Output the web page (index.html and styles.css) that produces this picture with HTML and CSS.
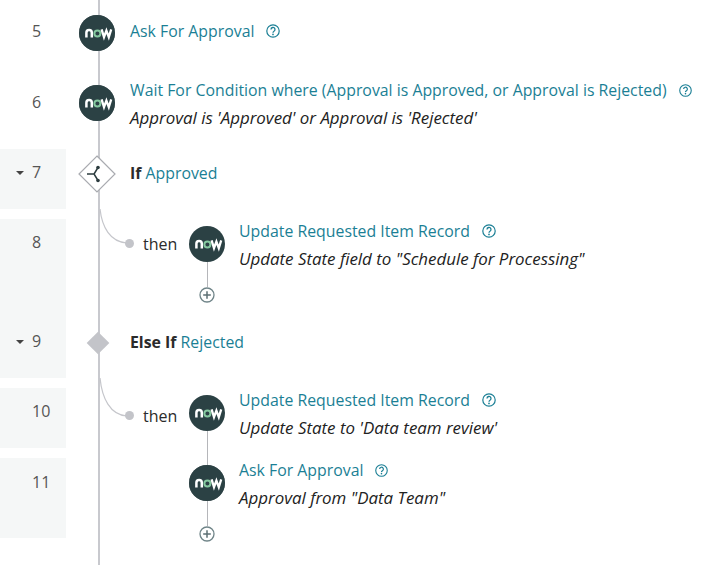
FILE: index.html
```html
<!DOCTYPE html>
<html lang="en">
<head>
    <meta charset="UTF-8">
    <title>Flow Steps</title>
    <link rel="stylesheet" href="styles.css">
</head>
<body>
    <svg width="0" height="0" class="defs">
        <symbol id="now" viewBox="0 0 36 36">
            <circle cx="18" cy="18" r="18" fill="#2b4144"/>
            <path d="M7.4 22.6v-4.8a2.7 2.7 0 0 1 5.4 0v4.8" fill="none" stroke="#fff" stroke-width="2.5"/>
            <circle cx="18.4" cy="18.4" r="3" fill="none" stroke="#86c9a0" stroke-width="2"/>
            <path d="M22.6 14.4l2.4 7.8 2.4-6.6 2.4 6.6 2.4-7.8" fill="none" stroke="#fff" stroke-width="2.3"/>
        </symbol>
        <symbol id="help" viewBox="0 0 14 14">
            <circle cx="7" cy="7" r="6.2" fill="none" stroke="currentColor" stroke-width="1.2"/>
            <path d="M5 5.5a2 2 0 1 1 3 1.7c-.7.4-1 .8-1 1.5" fill="none" stroke="currentColor" stroke-width="1.3"/>
            <circle cx="7" cy="10.4" r=".85" fill="currentColor"/>
        </symbol>
        <symbol id="plus" viewBox="0 0 16 16">
            <circle cx="8" cy="8" r="7" fill="#fff" stroke="#6f8488" stroke-width="1.3"/>
            <path d="M8 4.2v7.6M4.2 8h7.6" stroke="#5d7074" stroke-width="1.5"/>
        </symbol>
    </svg>

    <div class="flow">
        <div class="spine"></div>

        <div class="row row-5">
            <div class="num">5</div>
            <div class="marker"><svg class="now ring"><use href="#now"/></svg></div>
            <div class="body">
                <div class="title"><a>Ask For Approval</a><svg class="help"><use href="#help"/></svg></div>
            </div>
        </div>

        <div class="row row-6">
            <div class="num">6</div>
            <div class="marker"><svg class="now ring"><use href="#now"/></svg></div>
            <div class="body">
                <div class="title"><a>Wait For Condition where (Approval is Approved, or Approval is Rejected)</a><svg class="help small"><use href="#help"/></svg></div>
                <div class="desc">Approval is 'Approved' or Approval is 'Rejected'</div>
            </div>
        </div>

        <div class="row row-7 shaded">
            <div class="num"><span class="caret"></span>7</div>
            <div class="marker">
                <svg class="branch" width="38" height="38" viewBox="0 0 38 38">
                    <path d="M19 1L37 19 19 37 1 19Z" fill="#fff" stroke="#a9abb0" stroke-width="1.2"/>
                    <path d="M9 19h7M20 12.5l-4 6.5 4 6.5" fill="none" stroke="#2b3b3e" stroke-width="1.5"/>
                    <circle cx="20" cy="12.5" r="1.8" fill="#2b3b3e"/>
                    <circle cx="20" cy="25.5" r="1.8" fill="#2b3b3e"/>
                </svg>
            </div>
            <div class="body"><b>If</b> <a>Approved</a></div>
        </div>

        <div class="row row-8 shaded">
            <div class="num">8</div>
            <div class="then">
                <svg class="curve" width="36" height="36" viewBox="0 0 36 36"><path d="M1 0C3 18 11 33 28 34" fill="none" stroke="#c5c6cb" stroke-width="1.2"/></svg>
                <span class="dot"></span>
                <span class="then-label">then</span>
            </div>
            <div class="sub">
                <div class="sub-marker"><svg class="now"><use href="#now"/></svg><span class="stem"></span><svg class="plus"><use href="#plus"/></svg></div>
                <div class="body">
                    <div class="title"><a>Update Requested Item Record</a><svg class="help"><use href="#help"/></svg></div>
                    <div class="desc">Update State field to "Schedule for Processing"</div>
                </div>
            </div>
        </div>

        <div class="row row-9 shaded">
            <div class="num"><span class="caret"></span>9</div>
            <div class="marker"><span class="diamond"></span></div>
            <div class="body"><b>Else If</b> <a>Rejected</a></div>
        </div>

        <div class="row row-10 shaded">
            <div class="num">10</div>
            <div class="then">
                <svg class="curve" width="36" height="40" viewBox="0 0 36 40"><path d="M1 0C3 20 11 37 28 38" fill="none" stroke="#c5c6cb" stroke-width="1.2"/></svg>
                <span class="dot"></span>
                <span class="then-label">then</span>
            </div>
            <div class="sub">
                <div class="sub-marker"><svg class="now"><use href="#now"/></svg><span class="stem long"></span></div>
                <div class="body">
                    <div class="title"><a>Update Requested Item Record</a><svg class="help"><use href="#help"/></svg></div>
                    <div class="desc">Update State to 'Data team review'</div>
                </div>
            </div>
        </div>

        <div class="row row-11 shaded">
            <div class="num">11</div>
            <div class="then"></div>
            <div class="sub">
                <div class="sub-marker"><svg class="now ring"><use href="#now"/></svg><span class="stem"></span><svg class="plus"><use href="#plus"/></svg></div>
                <div class="body">
                    <div class="title"><a>Ask For Approval</a><svg class="help small"><use href="#help"/></svg></div>
                    <div class="desc">Approval from "Data Team"</div>
                </div>
            </div>
        </div>
    </div>
</body>
</html>
```

FILE: styles.css
```css
html, body {
    margin: 0;
    background: #fff;
}
body {
    font-family: "Open Sans", sans-serif;
    font-size: 15.85px;
    line-height: 22px;
    color: #2b2b2b;
    overflow: hidden;
}
.defs {
    display: block;
    height: 0;
}
.flow {
    position: relative;
    height: 571px;
}
.spine {
    position: absolute;
    left: 98px;
    top: 0;
    width: 2px;
    height: 565px;
    background: #c8c9ce;
}
a {
    color: #1b7f95;
}
b {
    font-weight: 700;
}
.row {
    display: flex;
    align-items: flex-start;
}
.row-5 { height: 70px; }
.row-6 { height: 79px; }
.row-7 { height: 60px; margin-bottom: 10px; }
.row-8 { height: 89px; }
.row-9 { height: 70px; margin-bottom: 10px; }
.row-10 { height: 60px; margin-bottom: 10px; }
.row-11 { height: 80px; }
.num {
    flex: none;
    box-sizing: border-box;
    width: 66px;
    height: 100%;
    padding-left: 32px;
    font-size: 16px;
    color: #555;
    position: relative;
}
.shaded .num {
    background: #f5f7f7;
}
.caret {
    position: absolute;
    left: 16px;
    top: 22px;
    border-left: 4px solid transparent;
    border-right: 4px solid transparent;
    border-top: 4px solid #444;
}
.row-9 .caret {
    top: 32px;
}
.marker {
    flex: none;
    width: 64px;
    box-sizing: border-box;
    padding-left: 13px;
    position: relative;
}
.now {
    display: block;
    width: 36px;
    height: 36px;
    flex: none;
}
.now.ring {
    filter: drop-shadow(0 0.5px 0.5px #6d7679);
}
.title {
    display: flex;
    align-items: center;
}
.help {
    width: 14px;
    height: 14px;
    margin-left: 12px;
    color: #1b7f95;
    flex: none;
}
.help.small {
    width: 13px;
    height: 13px;
}
.desc {
    font-size: 16.9px;
    font-style: italic;
    margin-top: 6px;
    color: #222;
}

/* step rows, vertical placement */
.row-5 .num { padding-top: 20px; }
.row-5 .marker { padding-top: 15px; }
.row-5 .body { padding-top: 20px; }
.row-6 .num { padding-top: 21px; }
.row-6 .marker { padding-top: 15px; }
.row-6 .body { padding-top: 9px; }
.row-7 .num { padding-top: 12px; }
.row-7 .marker { padding-top: 6px; padding-left: 12px; }
.row-7 .body { padding-top: 13px; }
.row-8 .num, .row-10 .num { padding-top: 12px; }
.row-9 .num { padding-top: 22px; }
.row-9 .marker { padding-top: 24px; padding-left: 24px; }
.row-9 .body { padding-top: 23px; }
.row-11 .num { padding-top: 13px; }

.diamond {
    display: block;
    width: 16px;
    height: 16px;
    margin-top: 3px;
    background: #c3c4c9;
    transform: rotate(45deg);
}
.then {
    flex: none;
    width: 123px;
    height: 100%;
    position: relative;
    font-size: 16px;
}
.curve {
    position: absolute;
    left: 33px;
    top: -10px;
}
.dot {
    position: absolute;
    left: 59px;
    top: 20px;
    width: 9px;
    height: 9px;
    border-radius: 50%;
    background: #c3c4c9;
}
.then-label {
    position: absolute;
    left: 77px;
    top: 14px;
}
.row-10 .dot { top: 23px; }
.row-10 .then-label { top: 17px; }
.sub {
    display: flex;
    flex: none;
    gap: 14px;
    padding-top: 7px;
    box-sizing: border-box;
    height: 100%;
}
.sub .body {
    margin-top: -6px;
}
.sub-marker {
    display: flex;
    flex-direction: column;
    align-items: center;
    width: 36px;
}
.stem {
    flex: none;
    width: 1px;
    height: 25px;
    background: #b5b6ba;
}
.stem.long {
    height: 34px;
}
.plus {
    width: 16px;
    height: 16px;
    flex: none;
}
```
